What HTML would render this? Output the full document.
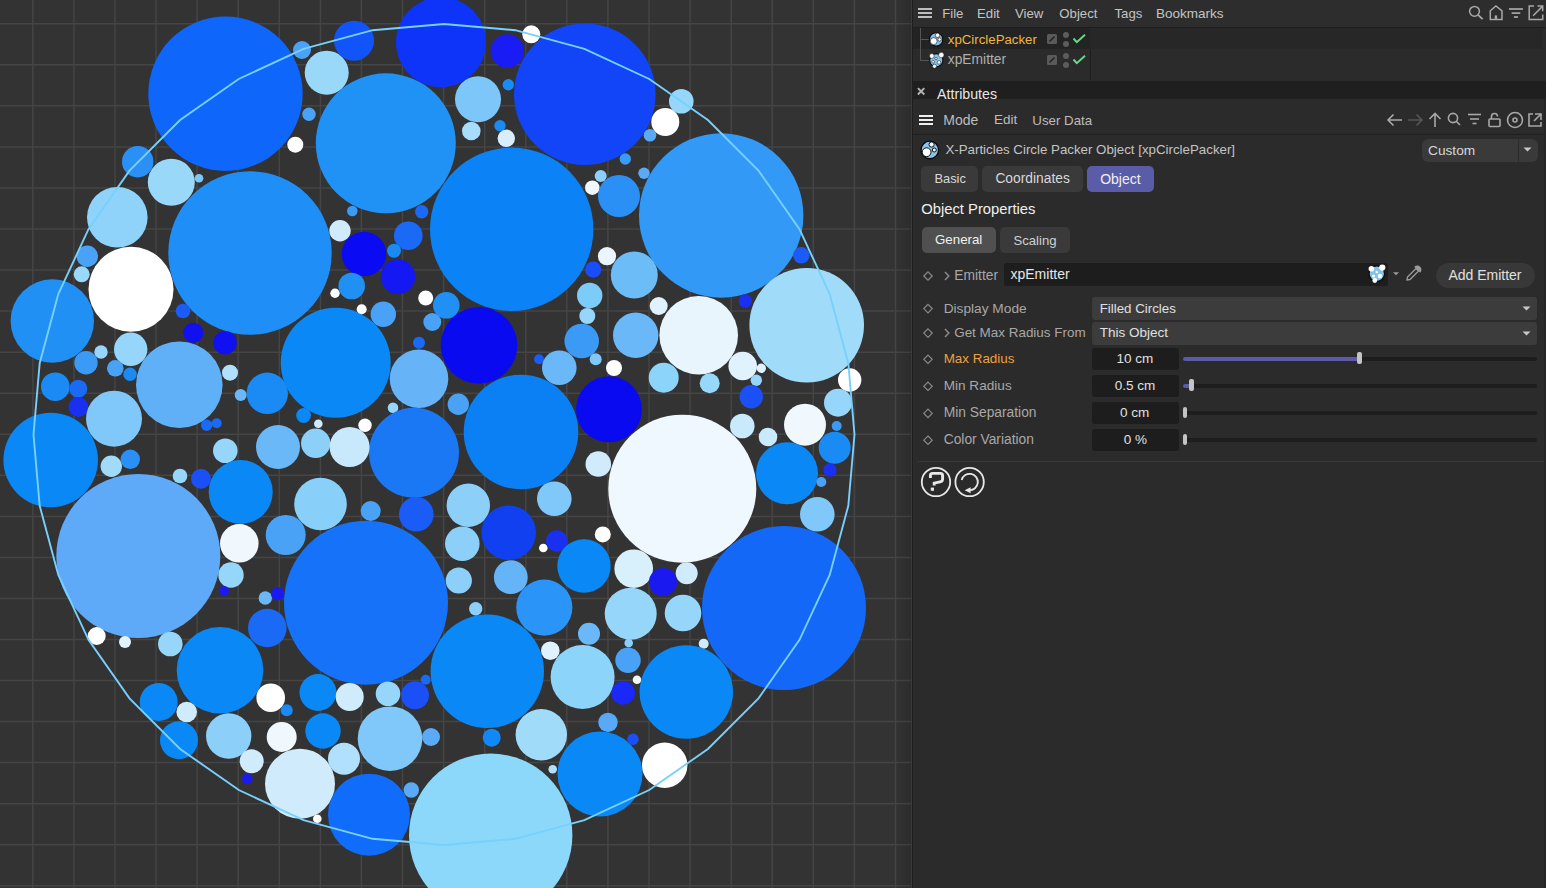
<!DOCTYPE html>
<html><head><meta charset="utf-8">
<style>
*{margin:0;padding:0;box-sizing:border-box}
html,body{width:1546px;height:888px;overflow:hidden;background:#2b2b2b;font-family:"Liberation Sans",sans-serif}
.a{position:absolute;white-space:nowrap}
</style></head><body>
<svg width="911" height="888" viewBox="0 0 911 888" style="position:absolute;left:0;top:0">
<rect width="911" height="888" fill="#333333"/>
<g stroke="#454545" stroke-width="1.5"><line x1="32.8" y1="0" x2="32.8" y2="888"/><line x1="73.9" y1="0" x2="73.9" y2="888"/><line x1="115.0" y1="0" x2="115.0" y2="888"/><line x1="156.0" y1="0" x2="156.0" y2="888"/><line x1="197.1" y1="0" x2="197.1" y2="888"/><line x1="238.2" y1="0" x2="238.2" y2="888"/><line x1="279.3" y1="0" x2="279.3" y2="888"/><line x1="320.4" y1="0" x2="320.4" y2="888"/><line x1="361.4" y1="0" x2="361.4" y2="888"/><line x1="402.5" y1="0" x2="402.5" y2="888"/><line x1="443.6" y1="0" x2="443.6" y2="888"/><line x1="484.7" y1="0" x2="484.7" y2="888"/><line x1="525.8" y1="0" x2="525.8" y2="888"/><line x1="566.8" y1="0" x2="566.8" y2="888"/><line x1="607.9" y1="0" x2="607.9" y2="888"/><line x1="649.0" y1="0" x2="649.0" y2="888"/><line x1="690.1" y1="0" x2="690.1" y2="888"/><line x1="731.2" y1="0" x2="731.2" y2="888"/><line x1="772.2" y1="0" x2="772.2" y2="888"/><line x1="813.3" y1="0" x2="813.3" y2="888"/><line x1="854.4" y1="0" x2="854.4" y2="888"/><line x1="895.5" y1="0" x2="895.5" y2="888"/><line x1="0" y1="23.8" x2="911" y2="23.8"/><line x1="0" y1="64.8" x2="911" y2="64.8"/><line x1="0" y1="105.8" x2="911" y2="105.8"/><line x1="0" y1="146.9" x2="911" y2="146.9"/><line x1="0" y1="187.9" x2="911" y2="187.9"/><line x1="0" y1="229.0" x2="911" y2="229.0"/><line x1="0" y1="270.1" x2="911" y2="270.1"/><line x1="0" y1="311.1" x2="911" y2="311.1"/><line x1="0" y1="352.2" x2="911" y2="352.2"/><line x1="0" y1="393.2" x2="911" y2="393.2"/><line x1="0" y1="434.3" x2="911" y2="434.3"/><line x1="0" y1="475.3" x2="911" y2="475.3"/><line x1="0" y1="516.4" x2="911" y2="516.4"/><line x1="0" y1="557.4" x2="911" y2="557.4"/><line x1="0" y1="598.4" x2="911" y2="598.4"/><line x1="0" y1="639.5" x2="911" y2="639.5"/><line x1="0" y1="680.5" x2="911" y2="680.5"/><line x1="0" y1="721.6" x2="911" y2="721.6"/><line x1="0" y1="762.6" x2="911" y2="762.6"/><line x1="0" y1="803.7" x2="911" y2="803.7"/><line x1="0" y1="844.7" x2="911" y2="844.7"/><line x1="0" y1="885.8" x2="911" y2="885.8"/></g>
<circle cx="225.5" cy="93.7" r="77.2" fill="#0f66fb"/><circle cx="137.7" cy="161.7" r="15.7" fill="#2a90f5"/><circle cx="171.3" cy="182.3" r="23.5" fill="#9ad8fa"/><circle cx="199.0" cy="178.3" r="4.3" fill="#7ec8f8"/><circle cx="117.3" cy="217.3" r="30.3" fill="#8fd3fa"/><circle cx="87.3" cy="256.3" r="10.7" fill="#4aa2f6"/><circle cx="81.7" cy="274.3" r="8.0" fill="#9ad8fa"/><circle cx="131.0" cy="289.2" r="42.5" fill="#ffffff"/><circle cx="250.0" cy="253.0" r="81.7" fill="#1f8ff7"/><circle cx="295.3" cy="144.7" r="8.0" fill="#ffffff"/><circle cx="52.3" cy="321.0" r="41.7" fill="#2090f5"/><circle cx="441.0" cy="42.3" r="45.0" fill="#0e34fa"/><circle cx="354.0" cy="40.7" r="20.0" fill="#1054fa"/><circle cx="326.7" cy="72.7" r="22.0" fill="#9ad8fa"/><circle cx="302.0" cy="50.0" r="9.0" fill="#4aa2f6"/><circle cx="309.0" cy="114.3" r="6.7" fill="#4aa2f6"/><circle cx="385.8" cy="143.3" r="70.0" fill="#2192f5"/><circle cx="531.3" cy="34.3" r="9.0" fill="#ffffff"/><circle cx="507.3" cy="51.0" r="16.7" fill="#1a1cf5"/><circle cx="584.8" cy="94.2" r="70.8" fill="#1244f8"/><circle cx="478.0" cy="99.3" r="23.0" fill="#7cc6f9"/><circle cx="508.3" cy="84.7" r="5.7" fill="#1a8af5"/><circle cx="471.3" cy="131.0" r="9.3" fill="#a8dcfb"/><circle cx="500.0" cy="125.7" r="5.7" fill="#1a8af5"/><circle cx="506.3" cy="138.3" r="8.7" fill="#d8eefc"/><circle cx="511.7" cy="229.3" r="81.7" fill="#0b82f6"/><circle cx="600.7" cy="176.0" r="6.0" fill="#8cd0f9"/><circle cx="592.3" cy="187.7" r="7.3" fill="#f0f8fe"/><circle cx="619.0" cy="196.0" r="21.0" fill="#2a90f5"/><circle cx="352.3" cy="211.0" r="5.3" fill="#3a9af6"/><circle cx="421.7" cy="211.7" r="6.7" fill="#1a6af5"/><circle cx="340.0" cy="230.7" r="10.7" fill="#d0ecfc"/><circle cx="364.0" cy="254.0" r="22.3" fill="#0a0af5"/><circle cx="408.3" cy="235.7" r="14.3" fill="#1a6af5"/><circle cx="394.0" cy="250.7" r="7.0" fill="#1a8af5"/><circle cx="398.0" cy="276.7" r="17.3" fill="#1418f2"/><circle cx="351.7" cy="286.0" r="13.3" fill="#2090f5"/><circle cx="335.0" cy="293.3" r="4.7" fill="#ffffff"/><circle cx="425.7" cy="298.0" r="7.5" fill="#ffffff"/><circle cx="446.3" cy="305.3" r="13.3" fill="#2090f5"/><circle cx="593.2" cy="269.6" r="8.1" fill="#1a4cf8"/><circle cx="607.0" cy="256.2" r="9.1" fill="#eaf5fd"/><circle cx="589.7" cy="295.5" r="12.7" fill="#7cccf9"/><circle cx="681.3" cy="101.3" r="12.3" fill="#96d6fa"/><circle cx="665.3" cy="122.0" r="14.0" fill="#ffffff"/><circle cx="650.0" cy="135.3" r="6.3" fill="#5aaaf6"/><circle cx="625.3" cy="159.0" r="5.7" fill="#3a9af6"/><circle cx="644.0" cy="173.3" r="5.7" fill="#5aaaf6"/><circle cx="721.2" cy="215.5" r="82.2" fill="#3399f7"/><circle cx="801.3" cy="255.3" r="8.3" fill="#1a5cf5"/><circle cx="634.3" cy="275.0" r="23.5" fill="#6cbcf8"/><circle cx="183.0" cy="311.0" r="7.3" fill="#1a5cf5"/><circle cx="193.3" cy="332.7" r="10.0" fill="#1010f0"/><circle cx="225.0" cy="342.7" r="11.7" fill="#1010f0"/><circle cx="130.7" cy="349.3" r="16.7" fill="#96d6fa"/><circle cx="101.0" cy="352.0" r="6.7" fill="#96d6fa"/><circle cx="86.0" cy="362.7" r="11.7" fill="#3a9af6"/><circle cx="115.3" cy="368.3" r="8.3" fill="#4aa2f6"/><circle cx="130.0" cy="374.3" r="6.7" fill="#1a8af5"/><circle cx="179.3" cy="384.7" r="43.3" fill="#60b0f8"/><circle cx="230.0" cy="372.7" r="8.0" fill="#b0e0fb"/><circle cx="240.7" cy="395.0" r="6.0" fill="#6ab8f8"/><circle cx="267.3" cy="393.3" r="20.7" fill="#1a8af5"/><circle cx="55.3" cy="386.7" r="14.3" fill="#1a8af5"/><circle cx="78.3" cy="388.7" r="9.0" fill="#1a6af5"/><circle cx="78.3" cy="407.0" r="10.0" fill="#1a30f0"/><circle cx="114.0" cy="418.7" r="28.0" fill="#80c8f9"/><circle cx="206.7" cy="425.3" r="5.7" fill="#1a6af5"/><circle cx="216.7" cy="423.3" r="5.0" fill="#1a6af5"/><circle cx="50.7" cy="460.0" r="47.3" fill="#0a88f5"/><circle cx="111.3" cy="466.3" r="10.7" fill="#a0dcfa"/><circle cx="130.3" cy="459.3" r="9.7" fill="#2a90f5"/><circle cx="225.3" cy="450.7" r="12.3" fill="#96d6fa"/><circle cx="278.0" cy="447.0" r="22.0" fill="#6ab8f8"/><circle cx="180.0" cy="476.0" r="7.3" fill="#96d6fa"/><circle cx="201.0" cy="478.7" r="10.0" fill="#1a50f5"/><circle cx="240.7" cy="492.0" r="32.0" fill="#0a88f5"/><circle cx="138.3" cy="556.0" r="82.0" fill="#5eaaf8"/><circle cx="239.3" cy="543.3" r="19.3" fill="#f0f8fe"/><circle cx="285.7" cy="535.0" r="20.0" fill="#4aa2f6"/><circle cx="231.0" cy="575.0" r="12.7" fill="#96d6fa"/><circle cx="335.7" cy="362.7" r="55.0" fill="#0a88f5"/><circle cx="361.7" cy="309.3" r="5.0" fill="#ffffff"/><circle cx="383.3" cy="314.3" r="12.7" fill="#4aa2f6"/><circle cx="432.3" cy="322.0" r="9.0" fill="#4aa2f6"/><circle cx="479.0" cy="345.3" r="38.3" fill="#0a0af0"/><circle cx="419.0" cy="342.7" r="6.0" fill="#1a6af5"/><circle cx="419.0" cy="378.7" r="29.3" fill="#66b3f8"/><circle cx="393.0" cy="407.7" r="5.3" fill="#96d6fa"/><circle cx="458.3" cy="404.3" r="10.7" fill="#4aa2f6"/><circle cx="587.3" cy="316.0" r="8.0" fill="#96d6fa"/><circle cx="581.7" cy="341.0" r="17.3" fill="#3a9af6"/><circle cx="539.0" cy="359.3" r="5.0" fill="#1a5cf5"/><circle cx="559.3" cy="367.7" r="17.3" fill="#6ab8f8"/><circle cx="595.7" cy="359.3" r="6.0" fill="#80c8f9"/><circle cx="614.0" cy="368.0" r="8.0" fill="#ffffff"/><circle cx="609.0" cy="409.3" r="33.0" fill="#0a0af0"/><circle cx="521.0" cy="432.0" r="57.3" fill="#0b80f5"/><circle cx="414.0" cy="452.7" r="45.0" fill="#1a78f5"/><circle cx="365.0" cy="425.3" r="6.7" fill="#ffffff"/><circle cx="318.3" cy="423.7" r="4.3" fill="#d0ecfc"/><circle cx="303.6" cy="415.5" r="7.4" fill="#0a88f8"/><circle cx="315.7" cy="443.3" r="14.7" fill="#8cd0f9"/><circle cx="349.6" cy="447.0" r="20.0" fill="#c8e8fc"/><circle cx="598.3" cy="464.0" r="12.8" fill="#d0ecfc"/><circle cx="320.5" cy="504.0" r="26.3" fill="#88d0fa"/><circle cx="370.7" cy="511.0" r="10.0" fill="#4aa2f6"/><circle cx="416.3" cy="514.3" r="17.3" fill="#1a5cf5"/><circle cx="468.3" cy="505.3" r="21.7" fill="#8cd0f9"/><circle cx="554.3" cy="498.7" r="17.3" fill="#80c8f9"/><circle cx="508.7" cy="532.7" r="27.3" fill="#1040f0"/><circle cx="462.3" cy="543.7" r="17.3" fill="#8cd0f9"/><circle cx="543.3" cy="548.0" r="4.3" fill="#ffffff"/><circle cx="556.7" cy="541.0" r="10.7" fill="#1a30f0"/><circle cx="602.8" cy="534.4" r="8.0" fill="#ffffff"/><circle cx="584.0" cy="566.0" r="26.7" fill="#0a88f5"/><circle cx="458.8" cy="580.5" r="13.1" fill="#8cd0f9"/><circle cx="510.8" cy="577.2" r="16.9" fill="#66b4f8"/><circle cx="366.0" cy="602.7" r="82.0" fill="#1672f8"/><circle cx="658.7" cy="306.0" r="9.0" fill="#e0f2fd"/><circle cx="698.7" cy="335.3" r="39.3" fill="#e8f5fd"/><circle cx="635.7" cy="335.3" r="22.7" fill="#6ab8f8"/><circle cx="806.7" cy="325.3" r="57.3" fill="#a0dcfa"/><circle cx="745.3" cy="301.0" r="6.7" fill="#1a30f0"/><circle cx="663.7" cy="377.7" r="15.0" fill="#8cd4fa"/><circle cx="709.7" cy="383.3" r="10.0" fill="#96d8fa"/><circle cx="742.7" cy="366.0" r="14.3" fill="#e0f2fd"/><circle cx="761.3" cy="368.3" r="4.7" fill="#e0f2fd"/><circle cx="756.3" cy="380.3" r="5.7" fill="#96d6fa"/><circle cx="751.3" cy="396.7" r="11.7" fill="#1a50f5"/><circle cx="849.7" cy="380.0" r="11.7" fill="#ffffff"/><circle cx="838.0" cy="402.7" r="14.0" fill="#96d6fa"/><circle cx="742.3" cy="426.0" r="12.3" fill="#c8eafc"/><circle cx="768.0" cy="437.0" r="9.3" fill="#c8eafc"/><circle cx="805.0" cy="424.7" r="21.0" fill="#f0f8fe"/><circle cx="836.7" cy="426.0" r="5.0" fill="#3a9af6"/><circle cx="834.7" cy="447.7" r="16.0" fill="#1a8af5"/><circle cx="682.3" cy="488.7" r="74.0" fill="#eef8fe"/><circle cx="787.0" cy="473.3" r="31.0" fill="#0a88f5"/><circle cx="830.0" cy="470.0" r="6.7" fill="#1a30f0"/><circle cx="821.3" cy="482.0" r="5.0" fill="#4aa2f6"/><circle cx="817.3" cy="514.3" r="17.3" fill="#80c8f9"/><circle cx="784.0" cy="608.0" r="82.0" fill="#1468f8"/><circle cx="633.7" cy="568.7" r="19.3" fill="#d8f0fc"/><circle cx="663.0" cy="582.0" r="14.0" fill="#1a1af0"/><circle cx="686.7" cy="573.3" r="11.0" fill="#d0ecfc"/><circle cx="96.7" cy="636.0" r="9.0" fill="#ffffff"/><circle cx="125.0" cy="642.0" r="6.0" fill="#e0f2fd"/><circle cx="170.3" cy="644.0" r="12.3" fill="#96d6fa"/><circle cx="220.0" cy="670.3" r="43.3" fill="#0a88f5"/><circle cx="158.7" cy="702.0" r="19.0" fill="#0a88f5"/><circle cx="186.7" cy="712.0" r="10.3" fill="#d0ecfc"/><circle cx="179.0" cy="740.3" r="19.0" fill="#0a88f5"/><circle cx="228.7" cy="736.0" r="22.7" fill="#8cd0f9"/><circle cx="251.7" cy="761.3" r="12.0" fill="#d0ecfc"/><circle cx="247.3" cy="778.7" r="5.3" fill="#1a1af0"/><circle cx="300.0" cy="783.7" r="35.0" fill="#d0ecfc"/><circle cx="270.7" cy="697.7" r="14.3" fill="#ffffff"/><circle cx="286.7" cy="710.3" r="6.0" fill="#1a8af5"/><circle cx="281.7" cy="737.0" r="15.0" fill="#f0f8fe"/><circle cx="267.3" cy="628.0" r="19.3" fill="#1a6af5"/><circle cx="265.3" cy="598.0" r="6.7" fill="#6ab8f8"/><circle cx="277.7" cy="593.7" r="6.7" fill="#1a1af0"/><circle cx="224.0" cy="591.0" r="5.0" fill="#1a1af0"/><circle cx="318.0" cy="692.5" r="18.5" fill="#0a88f5"/><circle cx="487.3" cy="671.3" r="56.7" fill="#0a88f5"/><circle cx="475.7" cy="608.7" r="6.7" fill="#8cd0f9"/><circle cx="544.3" cy="607.6" r="28.1" fill="#2a94f8"/><circle cx="589.0" cy="633.7" r="11.0" fill="#6ab8f8"/><circle cx="550.3" cy="650.7" r="9.3" fill="#e0f2fd"/><circle cx="582.6" cy="677.0" r="32.0" fill="#8cd4fa"/><circle cx="349.7" cy="697.0" r="14.0" fill="#d0ecfc"/><circle cx="388.0" cy="693.7" r="12.3" fill="#96d6fa"/><circle cx="415.0" cy="695.3" r="14.0" fill="#1a50f5"/><circle cx="425.7" cy="679.7" r="5.0" fill="#1a6af5"/><circle cx="323.0" cy="731.0" r="17.7" fill="#0a88f5"/><circle cx="390.0" cy="738.7" r="32.3" fill="#80c8f9"/><circle cx="431.0" cy="737.0" r="9.0" fill="#5aaaf6"/><circle cx="344.0" cy="758.7" r="16.0" fill="#b0e0fb"/><circle cx="369.0" cy="814.7" r="41.0" fill="#106cfa"/><circle cx="317.3" cy="818.7" r="4.3" fill="#ffffff"/><circle cx="411.3" cy="790.0" r="7.7" fill="#5aaaf6"/><circle cx="490.7" cy="835.3" r="81.7" fill="#8cd8fb"/><circle cx="491.7" cy="737.7" r="9.0" fill="#1088f8"/><circle cx="541.3" cy="734.7" r="25.7" fill="#a0dcfa"/><circle cx="552.7" cy="769.3" r="4.3" fill="#b0e0fb"/><circle cx="600.0" cy="774.0" r="42.5" fill="#0a88f5"/><circle cx="630.7" cy="613.7" r="26.0" fill="#96d6fa"/><circle cx="683.0" cy="613.0" r="18.3" fill="#96d6fa"/><circle cx="628.7" cy="643.0" r="4.3" fill="#8cd0f9"/><circle cx="703.7" cy="643.7" r="5.0" fill="#d0ecfc"/><circle cx="628.0" cy="660.3" r="12.7" fill="#4aa2f6"/><circle cx="637.0" cy="679.7" r="4.3" fill="#f0f8fe"/><circle cx="623.2" cy="693.0" r="11.8" fill="#1a28f8"/><circle cx="686.3" cy="692.0" r="46.7" fill="#0a88f5"/><circle cx="608.0" cy="722.4" r="9.7" fill="#5aa8f8"/><circle cx="633.0" cy="739.3" r="5.7" fill="#1a50f5"/><circle cx="664.7" cy="765.3" r="22.7" fill="#ffffff"/>
<polygon points="854.5,434.5 848.3,505.8 829.7,574.9 799.5,639.8 758.5,698.4 707.9,749.0 649.2,790.0 584.4,820.2 515.3,838.8 444.0,845.0 372.7,838.8 303.6,820.2 238.8,790.0 180.1,749.0 129.5,698.4 88.5,639.8 58.3,574.9 39.7,505.8 33.5,434.5 39.7,363.2 58.3,294.1 88.5,229.2 129.5,170.6 180.1,120.0 238.7,79.0 303.6,48.8 372.7,30.2 444.0,24.0 515.3,30.2 584.4,48.8 649.2,79.0 707.9,120.0 758.5,170.6 799.5,229.2 829.7,294.1 848.3,363.2" fill="none" stroke="#78d0fc" stroke-width="1.9"/>
<defs><linearGradient id="vg" x1="0" x2="1" y1="0" y2="0"><stop offset="0" stop-color="#000" stop-opacity="0"/><stop offset="1" stop-color="#000" stop-opacity="0.13"/></linearGradient></defs>
<rect x="893" y="0" width="18" height="888" fill="url(#vg)"/>
</svg>
<div class="a" style="left:911px;top:0px;width:635px;height:888px;background:#2b2b2b;"></div>
<div class="a" style="left:911px;top:0px;width:1px;height:888px;background:#3a3a3a;"></div>
<div class="a" style="left:912px;top:0px;width:1px;height:888px;background:#1e1e1e;"></div>
<div class="a" style="left:913px;top:0px;width:633px;height:27px;background:#2d2d2d;"></div>
<div class="a" style="left:913px;top:27px;width:633px;height:1px;background:#1f1f1f;"></div>
<div class="a" style="left:918px;top:8px;width:14px;height:2px;background:#bdbdbd;"></div>
<div class="a" style="left:918px;top:12px;width:14px;height:2px;background:#bdbdbd;"></div>
<div class="a" style="left:918px;top:16px;width:14px;height:2px;background:#bdbdbd;"></div>
<div class="a" style="left:942.2px;top:6.83px;font-size:13.2px;line-height:13.2px;color:#c4c4c4;">File</div>
<div class="a" style="left:977.0px;top:6.83px;font-size:13.2px;line-height:13.2px;color:#c4c4c4;">Edit</div>
<div class="a" style="left:1014.9px;top:6.83px;font-size:13.2px;line-height:13.2px;color:#c4c4c4;">View</div>
<div class="a" style="left:1059.3px;top:6.83px;font-size:13.2px;line-height:13.2px;color:#c4c4c4;">Object</div>
<div class="a" style="left:1114.5px;top:6.83px;font-size:13.2px;line-height:13.2px;color:#c4c4c4;">Tags</div>
<div class="a" style="left:1156.1px;top:6.57px;font-size:13.5px;line-height:13.5px;color:#c4c4c4;">Bookmarks</div>
<svg class="a" style="left:1466px;top:4px" width="80" height="20" viewBox="0 0 80 20" fill="none" stroke="#a8a8a8" stroke-width="1.5">
<circle cx="8.5" cy="7.35" r="4.9"/><line x1="12" y1="10.9" x2="16.6" y2="15.2" stroke-width="1.8"/>
<path d="M24.3 15.5 V6.8 L29.9 1.9 L36 6.8 V15.5 Z"/><rect x="28.7" y="11.4" width="2.4" height="4.1" fill="#a8a8a8" stroke="none"/>
<line x1="43" y1="5" x2="56.9" y2="5" stroke-width="1.7"/><line x1="45.6" y1="9.1" x2="54.3" y2="9.1" stroke-width="1.7"/><line x1="47.9" y1="13" x2="52" y2="13" stroke-width="1.7"/>
<path d="M68 2.1 H63.2 V15.5 H76.7 V10.5"/><path d="M71.5 2.1 H76.7 V7.3 M76.7 2.1 L67.1 11.7"/>
</svg>
<div class="a" style="left:913px;top:28px;width:629px;height:21px;background:#272727;"></div>
<div class="a" style="left:913px;top:28px;width:177px;height:21px;background:#232323;"></div>
<div class="a" style="left:1090px;top:49px;width:1px;height:31px;background:#1e1e1e;"></div>
<div class="a" style="left:920px;top:28px;width:1px;height:32px;background:#555;"></div>
<div class="a" style="left:920px;top:39px;width:9px;height:1px;background:#555;"></div>
<div class="a" style="left:920px;top:60px;width:9px;height:1px;background:#555;"></div>
<svg class="a" style="left:927px;top:30px" width="20" height="42" viewBox="0 0 20 42" stroke="#0a0a0a">
<circle cx="9.1" cy="9.4" r="6.7" fill="#84c2ea" stroke-width="1.1"/>
<g fill="#fff" stroke-width="0.6"><circle cx="6.7" cy="11.15" r="3.5"/><circle cx="10.5" cy="5.3" r="2.2"/><circle cx="12.6" cy="9.5" r="1.7"/></g>
<circle cx="9.3" cy="30.2" r="6.6" fill="#84c2ea" stroke-width="1.1"/>
<g fill="#fff" stroke-width="0.5"><circle cx="4.8" cy="26" r="2.4"/><circle cx="14.3" cy="25" r="2.7"/><circle cx="9" cy="28.5" r="1.1"/><circle cx="6.2" cy="31.8" r="1.3"/><circle cx="12" cy="32.4" r="1.8"/><circle cx="7.5" cy="36.2" r="2"/></g>
</svg>
<div class="a" style="left:947.8px;top:32.68px;font-size:13.25px;line-height:13.25px;color:#f2b63e;">xpCirclePacker</div>
<div class="a" style="left:947.8px;top:53.02px;font-size:13.8px;line-height:13.8px;color:#b0b0b0;">xpEmitter</div>
<svg class="a" style="left:1045px;top:30px" width="45" height="40" viewBox="0 0 45 40">
<rect x="2" y="4" width="10" height="10" rx="1.5" fill="#5a5a5a"/><line x1="4.5" y1="11.5" x2="9.5" y2="6.5" stroke="#1e1e1e" stroke-width="1.4"/>
<circle cx="21" cy="5" r="3" fill="#5c5c5c"/><circle cx="21" cy="14" r="3" fill="#5c5c5c"/>
<path d="M28.5 8.5 L31.8 12.2 L40 4.8" fill="none" stroke="#66dc88" stroke-width="1.9"/>
<rect x="2" y="25" width="10" height="10" rx="1.5" fill="#5a5a5a"/><line x1="4.5" y1="32.5" x2="9.5" y2="27.5" stroke="#1e1e1e" stroke-width="1.4"/>
<circle cx="21" cy="26" r="3" fill="#5c5c5c"/><circle cx="21" cy="35" r="3" fill="#5c5c5c"/>
<path d="M28.5 29.5 L31.8 33.2 L40 25.8" fill="none" stroke="#66dc88" stroke-width="1.9"/>
</svg>
<div class="a" style="left:913px;top:81px;width:633px;height:18px;background:#1f1f1f;"></div>
<svg class="a" style="left:917px;top:87px" width="9" height="9" viewBox="0 0 9 9" stroke="#b4b4b4" stroke-width="1.9"><line x1="0.9" y1="1.1" x2="7.3" y2="7.5"/><line x1="7.3" y1="1.1" x2="0.9" y2="7.5"/></svg>
<div class="a" style="left:937.1px;top:86.98px;font-size:14.2px;line-height:14.2px;color:#e6e6e6;">Attributes</div>
<div class="a" style="left:913px;top:134px;width:633px;height:1px;background:#1f1f1f;"></div>
<div class="a" style="left:919px;top:115px;width:14px;height:2px;background:#eeeeee;"></div>
<div class="a" style="left:919px;top:119px;width:14px;height:2px;background:#eeeeee;"></div>
<div class="a" style="left:919px;top:123px;width:14px;height:2px;background:#eeeeee;"></div>
<div class="a" style="left:943.3px;top:112.95px;font-size:14px;line-height:14px;color:#bdbdbd;">Mode</div>
<div class="a" style="left:994.0px;top:113.37px;font-size:13.5px;line-height:13.5px;color:#bdbdbd;">Edit</div>
<div class="a" style="left:1032.3px;top:113.54px;font-size:13.3px;line-height:13.3px;color:#bdbdbd;">User Data</div>
<svg class="a" style="left:1386px;top:111px" width="160" height="18" viewBox="0 0 160 18" fill="none" stroke="#a8a8a8" stroke-width="1.6">
<path d="M2 9 H16 M7.5 3.5 L2 9 L7.5 14.5"/>
<path d="M22 9 H36 M30.5 3.5 L36 9 L30.5 14.5" stroke="#555"/>
<path d="M49 16 V2.5 M43.5 8 L49 2.5 L54.5 8"/>
<circle cx="67" cy="7" r="4.6"/><line x1="70.3" y1="10.3" x2="74" y2="14"/>
<line x1="82" y1="3.5" x2="95" y2="3.5"/><line x1="84" y1="8" x2="93" y2="8"/><line x1="86.5" y1="12.5" x2="90.5" y2="12.5"/>
<rect x="103" y="8" width="11" height="7.5" rx="1"/><path d="M105.5 8 V5.5 A3 3 0 0 1 111.5 5.5"/>
<circle cx="129" cy="9" r="7.5"/><circle cx="129" cy="9" r="2"/>
<path d="M147 3 H143 V15 H155 V11"/><path d="M149 3 H155 V9 M155 3 L148 10"/>
</svg>
<svg class="a" style="left:919px;top:139px" width="22" height="22" viewBox="0 0 22 22" stroke="#0a0a0a">
<circle cx="10.8" cy="10.9" r="8.8" fill="#88c4ec" stroke-width="1.4"/>
<circle cx="7.6" cy="13.2" r="4.4" fill="#fff" stroke-width="1"/><circle cx="12.6" cy="5.5" r="2.6" fill="#fff" stroke-width="1"/><circle cx="15.3" cy="11" r="2" fill="#fff" stroke-width="1"/>
</svg>
<div class="a" style="left:945.4px;top:143.44px;font-size:13.3px;line-height:13.3px;color:#c4c4c4;">X-Particles Circle Packer Object [xpCirclePacker]</div>
<div class="a" style="left:1422px;top:139px;width:116px;height:23px;background:#3a3a3a;border-radius:6px"></div>
<div class="a" style="left:1518px;top:139px;width:1px;height:23px;background:#2c2c2c;"></div>
<div class="a" style="left:1428.0px;top:144.40px;font-size:13.7px;line-height:13.7px;color:#d8d8d8;">Custom</div>
<svg class="a" style="left:1522px;top:146px" width="12" height="8"><path d="M1.5 1.5 H9.5 L5.5 5.5 Z" fill="#c8c8c8"/></svg>
<div class="a" style="left:921px;top:166px;width:57px;height:26px;background:#3a3a3a;border-radius:5px"></div>
<div class="a" style="left:982px;top:166px;width:101px;height:26px;background:#3a3a3a;border-radius:5px"></div>
<div class="a" style="left:1087px;top:166px;width:67px;height:26px;background:#5a5ca8;border-radius:5px"></div>
<div class="a" style="left:934.4px;top:172.58px;font-size:12.9px;line-height:12.9px;color:#d8d8d8;">Basic</div>
<div class="a" style="left:995.4px;top:171.82px;font-size:13.8px;line-height:13.8px;color:#d8d8d8;">Coordinates</div>
<div class="a" style="left:1100.2px;top:171.65px;font-size:14.0px;line-height:14.0px;color:#f0f0f0;">Object</div>
<div class="a" style="left:921.2px;top:201.97px;font-size:14.8px;line-height:14.8px;color:#f0f0f0;">Object Properties</div>
<div class="a" style="left:922px;top:227px;width:74px;height:26px;background:#505050;border-radius:5px"></div>
<div class="a" style="left:1000px;top:227px;width:70px;height:26px;background:#3a3a3a;border-radius:5px"></div>
<div class="a" style="left:935.0px;top:233.44px;font-size:13.3px;line-height:13.3px;color:#f0f0f0;">General</div>
<div class="a" style="left:1013.5px;top:233.61px;font-size:13.1px;line-height:13.1px;color:#d0d0d0;">Scaling</div>
<svg class="a" style="left:918px;top:260px" width="40" height="195" viewBox="0 0 40 195" fill="none" stroke="#8a8a8a" stroke-width="1.2">
<path d="M10 11.8 L14.2 16 L10 20.2 L5.8 16 Z"/>
<path d="M27 12 L30.8 16 L27 20" stroke-width="1.5"/>
<path d="M10 44.4 L14.2 48.6 L10 52.8 L5.8 48.6 Z"/>
<path d="M10 68.9 L14.2 73.1 L10 77.3 L5.8 73.1 Z"/>
<path d="M27 69.1 L30.8 73.1 L27 77.1" stroke-width="1.5"/>
<path d="M10 95.1 L14.2 99.3 L10 103.5 L5.8 99.3 Z"/>
<path d="M10 122.1 L14.2 126.3 L10 130.5 L5.8 126.3 Z"/>
<path d="M10 149.2 L14.2 153.4 L10 157.6 L5.8 153.4 Z"/>
<path d="M10 176 L14.2 180.2 L10 184.4 L5.8 180.2 Z"/>
</svg>
<div class="a" style="left:954.3px;top:269.02px;font-size:13.8px;line-height:13.8px;color:#a8a8a8;">Emitter</div>
<div class="a" style="left:1004px;top:263px;width:384px;height:23px;background:#1d1d1d;border-radius:3px"></div>
<div class="a" style="left:1010.5px;top:267.35px;font-size:14px;line-height:14px;color:#e6e6e6;">xpEmitter</div>
<svg class="a" style="left:1366px;top:263px" width="60" height="22" viewBox="0 0 60 22">
<circle cx="10.8" cy="10.7" r="7.8" fill="#84c2ea" stroke="#0a0a0a" stroke-width="1.3"/>
<circle cx="5.4" cy="5.8" r="2.8" fill="#fff"/><circle cx="16.3" cy="4.6" r="3.1" fill="#fff"/><circle cx="7.6" cy="13" r="1.6" fill="#fff"/><circle cx="13.9" cy="13" r="2.2" fill="#fff"/><circle cx="8.8" cy="17.5" r="2.4" fill="#fff"/><circle cx="10.8" cy="9" r="1.2" fill="#fff"/>
<path d="M27 9.3 H33 L30 12.3 Z" fill="#9a9a9a"/>
<path d="M41 17 L41.5 14 L50 5.5 L52.5 8 L44 16.5 Z" fill="none" stroke="#9a9a9a" stroke-width="1.4"/><path d="M49 4.5 A2.2 2.2 0 0 1 53.5 9" fill="#9a9a9a" stroke="#9a9a9a" stroke-width="2"/>
</svg>
<div class="a" style="left:1436px;top:263px;width:99px;height:25px;background:#383838;border-radius:12.5px"></div>
<div class="a" style="left:1448.4px;top:268.45px;font-size:14px;line-height:14px;color:#e0e0e0;">Add Emitter</div>
<div class="a" style="left:943.7px;top:301.70px;font-size:13.7px;line-height:13.7px;color:#a8a8a8;">Display Mode</div>
<div class="a" style="left:1092px;top:297px;width:445px;height:23px;background:#3c3c3c;border-radius:3px"></div>
<div class="a" style="left:1099.7px;top:302.04px;font-size:13.3px;line-height:13.3px;color:#e0e0e0;">Filled Circles</div>
<svg class="a" style="left:1521px;top:305px" width="12" height="8"><path d="M1.5 1.5 H9.5 L5.5 5.5 Z" fill="#c8c8c8"/></svg>
<div class="a" style="left:954.2px;top:326.41px;font-size:13.45px;line-height:13.45px;color:#a8a8a8;">Get Max Radius From</div>
<div class="a" style="left:1092px;top:322px;width:445px;height:23px;background:#3c3c3c;border-radius:3px"></div>
<div class="a" style="left:1099.7px;top:326.37px;font-size:13.5px;line-height:13.5px;color:#e0e0e0;">This Object</div>
<svg class="a" style="left:1521px;top:330px" width="12" height="8"><path d="M1.5 1.5 H9.5 L5.5 5.5 Z" fill="#c8c8c8"/></svg>
<div class="a" style="left:943.7px;top:352.36px;font-size:13.4px;line-height:13.4px;color:#f0a040;">Max Radius</div>
<div class="a" style="left:943.7px;top:379.39px;font-size:13.6px;line-height:13.6px;color:#a8a8a8;">Min Radius</div>
<div class="a" style="left:943.7px;top:406.12px;font-size:13.8px;line-height:13.8px;color:#a8a8a8;">Min Separation</div>
<div class="a" style="left:943.7px;top:432.92px;font-size:13.8px;line-height:13.8px;color:#a8a8a8;">Color Variation</div>
<div class="a" style="left:1092px;top:348px;width:87px;height:22px;background:#1d1d1d;border-radius:3px"></div>
<div class="a" style="left:1092px;top:375px;width:87px;height:22px;background:#1d1d1d;border-radius:3px"></div>
<div class="a" style="left:1092px;top:402px;width:87px;height:22px;background:#1d1d1d;border-radius:3px"></div>
<div class="a" style="left:1092px;top:429px;width:87px;height:22px;background:#1d1d1d;border-radius:3px"></div>
<div class="a" style="left:1074.9px;width:120px;text-align:center;top:352.27px;font-size:13.5px;line-height:13.5px;color:#e0e0e0">10 cm</div>
<div class="a" style="left:1075.1px;width:120px;text-align:center;top:379.47px;font-size:13.5px;line-height:13.5px;color:#e0e0e0">0.5 cm</div>
<div class="a" style="left:1074.6px;width:120px;text-align:center;top:406.37px;font-size:13.5px;line-height:13.5px;color:#e0e0e0">0 cm</div>
<div class="a" style="left:1075.4px;width:120px;text-align:center;top:433.17px;font-size:13.5px;line-height:13.5px;color:#e0e0e0">0 %</div>
<div class="a" style="left:1183px;top:356.5px;width:354px;height:4px;background:#1d1d1d;border-radius:2px"></div>
<div class="a" style="left:1183px;top:383.5px;width:354px;height:4px;background:#1d1d1d;border-radius:2px"></div>
<div class="a" style="left:1183px;top:410.5px;width:354px;height:4px;background:#1d1d1d;border-radius:2px"></div>
<div class="a" style="left:1183px;top:437.5px;width:354px;height:4px;background:#1d1d1d;border-radius:2px"></div>
<div class="a" style="left:1183px;top:356.5px;width:176px;height:4px;background:#5a5caa;border-radius:2px"></div>
<div class="a" style="left:1357px;top:352px;width:5px;height:12px;background:#c4c4c4;border-radius:2px"></div>
<div class="a" style="left:1183px;top:383.5px;width:8px;height:4px;background:#5a5caa;border-radius:2px"></div>
<div class="a" style="left:1189px;top:379px;width:5px;height:12px;background:#c4c4c4;border-radius:2px"></div>
<div class="a" style="left:1183px;top:407px;width:4px;height:11px;background:#c4c4c4;border-radius:2px"></div>
<div class="a" style="left:1183px;top:434px;width:4px;height:11px;background:#c4c4c4;border-radius:2px"></div>
<div class="a" style="left:918px;top:461px;width:628px;height:1px;background:#383838;"></div>
<svg class="a" style="left:919px;top:465px" width="70" height="34" viewBox="0 0 70 34" fill="none" stroke="#e8e8e8" stroke-width="1.8">
<circle cx="17" cy="17" r="14.2"/>
<path d="M11.4 13 V10.5 Q11.4 8.4 13.5 8.4 H21.5 Q23.6 8.4 23.6 10.5 V14 Q23.6 16.4 21 16.9 L15.2 18.2 V20.6" stroke-width="2.9"/><rect x="11.8" y="22.6" width="3.2" height="3.2" fill="#e8e8e8" stroke="none"/>
<circle cx="50.6" cy="17" r="14.2"/>
<path d="M42.7 14.9 A8.2 8.2 0 1 1 50.3 25.2"/><path d="M45.6 25.3 L51.6 22.2 L51.6 28.2 Z" fill="#e8e8e8" stroke="none"/>
</svg>
<div class="a" style="left:1544px;top:99px;width:2px;height:789px;background:#262626;"></div>
</body></html>
